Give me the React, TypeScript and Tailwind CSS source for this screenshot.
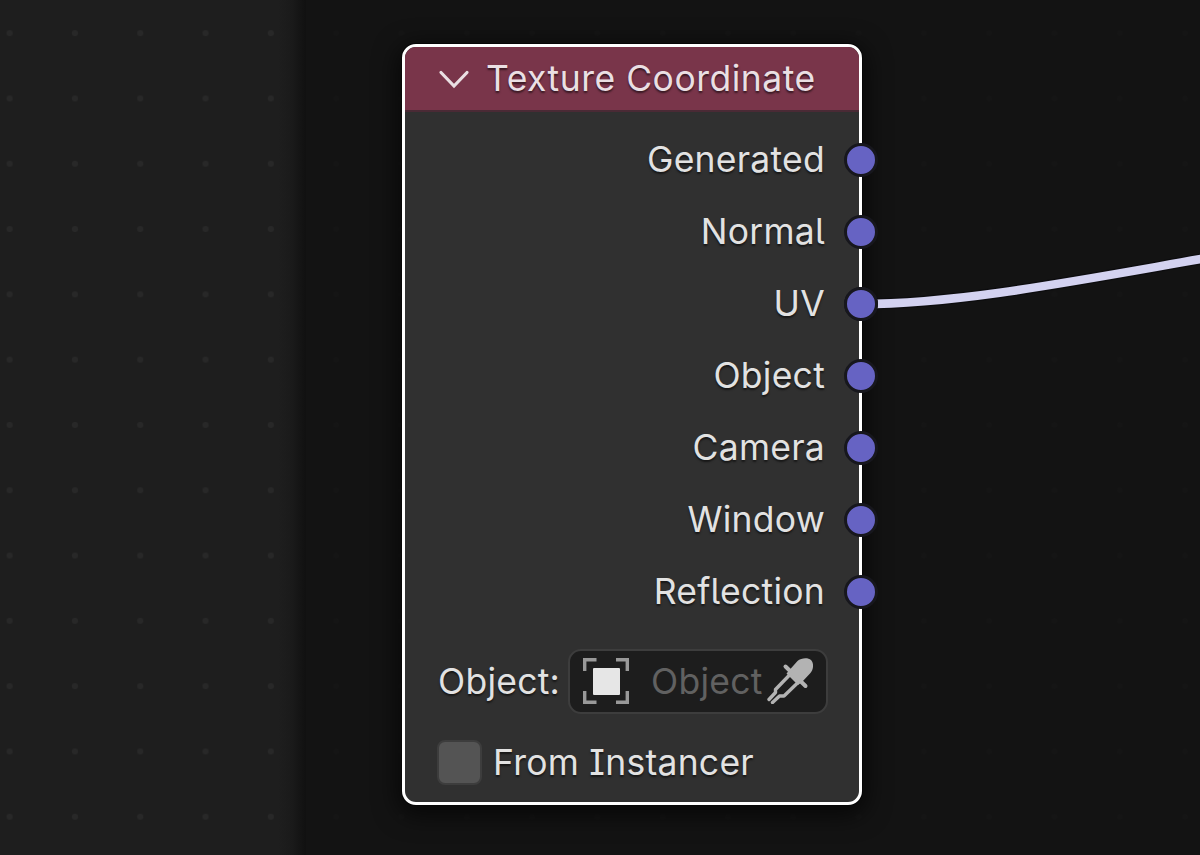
const outputs = ['Generated', 'Normal', 'UV', 'Object', 'Camera', 'Window', 'Reflection'];

function Grid() {
  return (
    <svg className="absolute inset-0 h-full w-full" aria-hidden="true">
      <defs>
        <pattern id="dots" x="-23" y="0.5" width="65.3" height="65.3" patternUnits="userSpaceOnUse">
          <circle cx="32.65" cy="32.65" r="3" fill="#282828" />
        </pattern>
        <pattern id="dots-dim" x="-23" y="0.5" width="65.3" height="65.3" patternUnits="userSpaceOnUse">
          <circle cx="32.65" cy="32.65" r="2.5" fill="#151515" />
        </pattern>
        <linearGradient id="edge" x1="0" x2="1" y1="0" y2="0">
          <stop offset="0" stopColor="#0c0c0c" stopOpacity="0" />
          <stop offset="0.5" stopColor="#0c0c0c" stopOpacity="0.2" />
          <stop offset="1" stopColor="#0c0c0c" stopOpacity="0.75" />
        </linearGradient>
      </defs>
      <rect width="306" height="855" fill="#1e1e1e" />
      <rect width="306" height="855" fill="url(#dots)" />
      <rect x="278" width="28" height="855" fill="url(#edge)" />
      <rect x="306" width="894" height="855" fill="#131313" />
      <rect x="306" width="894" height="855" fill="url(#dots-dim)" />
    </svg>
  );
}

function Link() {
  return (
    <svg className="absolute inset-0 h-full w-full" viewBox="0 0 1200 855" fill="none" aria-hidden="true">
      <path d="M861 304C960 304 1080 280 1210 257.500" stroke="#0c0c0e" strokeWidth="11" />
      <path d="M861 304C960 304 1080 280 1210 257.500" stroke="#d3d2f0" strokeWidth="8.6" />
    </svg>
  );
}

function ObjectIcon() {
  return (
    <svg className="h-[46px] w-[46px] shrink-0" viewBox="0 0 46 46" fill="none" aria-hidden="true">
      <path d="M1.7 13V1.7H13.5M33 1.7H44.3V13M44.3 33V44.3H33M13.5 44.3H1.7V33" stroke="#999" strokeWidth="3.4" />
      <rect x="10" y="10" width="27" height="27" rx="1" fill="#e6e6e6" />
    </svg>
  );
}

function Eyedropper() {
  return (
    <svg className="h-[46px] w-[46px] shrink-0" viewBox="0 0 46 46" fill="none" aria-hidden="true">
      <path d="M22.500 12L30.500 3C34 -0.200 41 -0.800 44 2C47 5 46.800 11.500 43 15.500L35 24L31 27L19.500 15.500Z" fill="#b3b3b3" />
      <path d="M18.500 8.500L38.500 28" stroke="#b3b3b3" strokeWidth="4" strokeLinecap="round" />
      <path d="M23.500 16L8.500 31.500V34.500L2 41.500M31 24.500L17 38H12.500L5.500 44.500" stroke="#b3b3b3" strokeWidth="3.400" strokeLinecap="round" strokeLinejoin="round" />
    </svg>
  );
}

export default function App() {
  return (
    <main className="relative h-[855px] w-[1200px] overflow-hidden bg-[#131313] font-['Inter',sans-serif] text-[35.5px] leading-[44px] tracking-[0.25px] text-[#e2e2e2] [font-feature-settings:'cv05','cv08']">
      <Grid />
      <section className="absolute top-[44px] left-[402px] flex h-[761px] w-[460px] flex-col rounded-[14px] border-[3px] border-white bg-[#303030] shadow-[0_0_0_1px_#060606,0_6px_24px_4px_rgba(0,0,0,0.65)]">
        <header className="flex h-[65px] shrink-0 items-center rounded-t-[11px] border-b-2 border-[#4a2a35] bg-[#79354a] pl-[33px] text-[#eadfe3] [text-shadow:0_2px_2px_rgba(0,0,0,0.55)]">
          <svg className="h-[22px] w-[32px]" viewBox="0 0 32 22" fill="none" aria-hidden="true">
            <path d="M3 4.500L16 18L29 4.500" stroke="#eadfe3" strokeWidth="3.200" strokeLinecap="round" />
          </svg>
          <h1 className="ml-[16px] pt-[1px] tracking-[0.5px] whitespace-nowrap">Texture Coordinate</h1>
        </header>
        <ul className="mt-[12px] flex shrink-0 flex-col">
          {outputs.map((name) => (
            <li key={name} className="-mr-[19px] flex h-[72px] items-center justify-end gap-[19px]">
              <span className="[text-shadow:0_2px_2px_rgba(0,0,0,0.55)]">{name}</span>
              <i className="relative z-10 h-[34px] w-[34px] rounded-full border-[3px] border-[#17171d] bg-[#6663c3]" />
            </li>
          ))}
        </ul>
        <div className="mt-[20px] flex h-[66px] shrink-0 items-center pl-[33px]">
          <span className="w-[130px] pt-[2px] [text-shadow:0_2px_2px_rgba(0,0,0,0.55)]">Object:</span>
          <div className="flex h-[65px] w-[260px] items-center rounded-[13px] border-2 border-[#3d3d3d] bg-[#1d1d1d] pl-[13px]">
            <ObjectIcon />
            <span className="ml-[22px] w-[116px] pt-[2px] text-[#616161]">Object</span>
            <Eyedropper />
          </div>
        </div>
        <label className="mt-[24px] flex h-[48px] shrink-0 items-center pl-[32px]">
          <span className="h-[45px] w-[45px] rounded-[8px] border-2 border-[#3d3d3d] bg-[#545454]" />
          <span className="ml-[11px] pt-[2px] whitespace-nowrap [text-shadow:0_2px_2px_rgba(0,0,0,0.55)]">From Instancer</span>
        </label>
      </section>
      <Link />
      <span className="absolute top-[287px] left-[844px] h-[34px] w-[34px] rounded-full border-[3px] border-[#17171d] bg-[#6663c3]" />
    </main>
  );
}
